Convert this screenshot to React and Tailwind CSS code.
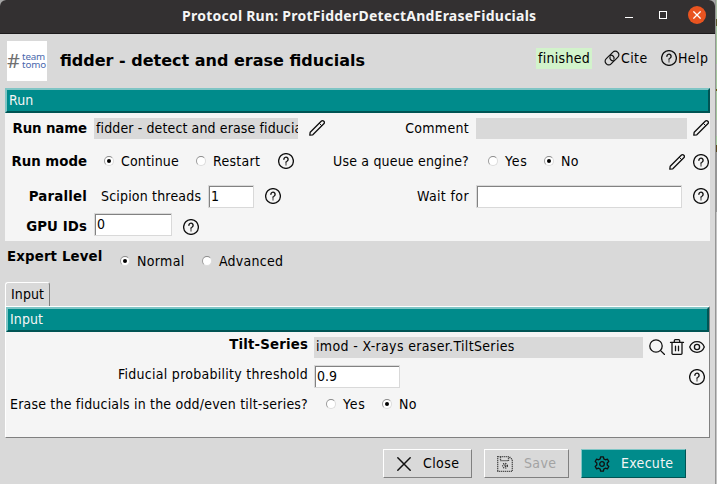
const dv = "font-['DejaVu_Sans_Condensed','DejaVu_Sans',sans-serif] [font-stretch:condensed]";

function Label({ className = "", track = "tracking-[0.15px]", children }) {
  return <span className={`block shrink-0 whitespace-nowrap pb-[2px] text-[14px] leading-[18px] ${track} ${className}`}>{children}</span>;
}

function Strong({ className = "", children }) {
  return (
    <span className={`block shrink-0 whitespace-nowrap font-['DejaVu_Sans',sans-serif] text-[13.33px] font-bold leading-[18px] [font-stretch:normal] ${className}`}>
      {children}
    </span>
  );
}

function Icon({ className = "", children }) {
  return (
    <svg viewBox="0 0 16 16" className={`block h-4 w-4 shrink-0 ${className}`} fill="none" stroke="#111" strokeWidth="1.3" strokeLinecap="round" strokeLinejoin="round">
      {children}
    </svg>
  );
}

function Help({ className }) {
  return (
    <Icon className={className}>
      <circle cx="8" cy="8" r="7.4" />
      <path d="M5.9 6.3a2.1 2.1 0 1 1 3.3 1.7C8.4 8.5 8 8.8 8 9.6" strokeWidth="1.4" />
      <path d="M8 9.2v2.8" stroke="#777" strokeWidth="1.5" />
    </Icon>
  );
}

function Pencil({ className }) {
  return (
    <Icon className={className}>
      <path d="M.8 15.2l.4-3L12.2 1.2a1.6 1.6 0 0 1 2.6 2.6L3.8 14.8z" />
      <path d="M10.4 3.4l2.2 2.2" strokeWidth="1" />
    </Icon>
  );
}

function Radio({ checked = false, className = "" }) {
  return (
    <span className={`flex h-[10px] w-[10px] shrink-0 items-center justify-center rounded-full border border-b-[#dcdcdc] border-l-[#9a9a9a] border-r-[#dcdcdc] border-t-[#8a8a8a] bg-white ${className}`}>
      {checked && <span className="block h-1 w-1 rounded-full bg-black" />}
    </span>
  );
}

function Entry({ className = "", children }) {
  return (
    <div className={`flex h-[23px] shrink-0 items-center border border-[#d9d9d9] bg-white pb-[2px] pl-[2px] text-[14px] leading-[18px] shadow-[inset_1px_1px_0_#828282] ${className}`}>
      {children}
    </div>
  );
}

function Section({ className = "", children }) {
  return (
    <div className={`flex h-[25px] items-center border-2 border-b-[#005454] border-l-[#7fc5c5] border-r-[#005454] border-t-[#7fc5c5] bg-[#008b8b] pb-[2px] text-[14px] leading-[18px] tracking-[0.1px] text-[#f5f5f5] ${className}`}>
      {children}
    </div>
  );
}

function TitleBar() {
  return (
    <div className="flex h-[34px] rounded-t-[6px] border-b border-[#1c1a1b] bg-[#333031] pl-[182px]">
      <h1 className="mt-[6px] w-[443px] whitespace-nowrap font-['Noto_Sans',sans-serif] text-[14px] font-bold leading-[20px] tracking-[0.24px] text-[#f5f5f5] [font-stretch:normal]">
        Protocol Run: ProtFidderDetectAndEraseFiducials
      </h1>
      <span className="mt-[17px] h-px w-2 bg-white" />
      <span className="ml-[26px] mt-[11px] h-2 w-2 border border-white" />
      <span className="ml-[21px] mt-[6px] flex h-[18px] w-[18px] items-center justify-center rounded-full bg-[#e95420]">
        <svg viewBox="0 0 8 8" className="h-2 w-2" stroke="white" strokeWidth="1.3">
          <path d="M.4.4l7.2 7.2M7.6.4L.4 7.6" />
        </svg>
      </span>
    </div>
  );
}

function Header() {
  return (
    <div className="flex h-[54px] pl-[7px]">
      <div className="mt-[7px] flex h-10 w-10 items-center bg-white font-['Noto_Sans',sans-serif] [font-stretch:normal]">
        <span className="w-[15px] text-[20px] leading-[24px] text-[#707070]">#</span>
        <span className="text-[9.5px] leading-[8px] tracking-[-0.15px] text-[#4a68ad]">
          <span className="block origin-left scale-x-[1.03]">team</span>
          <span className="block origin-left scale-x-[1.03]">tomo</span>
        </span>
      </div>
      <h2 className="ml-[13px] mt-[17px] w-[476px] whitespace-nowrap font-['DejaVu_Sans',sans-serif] text-[16px] font-bold leading-[20px] [font-stretch:normal]">
        fidder - detect and erase fiducials
      </h2>
      <div className="mt-[14px] h-[21px] w-14 bg-[#d2f3cb] pl-[2px] pt-px text-[14px] leading-[18px] tracking-[0.3px]">finished</div>
      <Icon className="ml-3 mt-[16px]">
        <path d="M6.2 4.9l2.7-2.7a3.2 3.2 0 0 1 4.7 0l.3.3a3.2 3.2 0 0 1 0 4.6l-2.7 2.7a3.2 3.2 0 0 1-4.5 0 2.8 2.8 0 0 1-.6-3" strokeWidth="1.2" />
        <path d="M9.8 11.1l-2.7 2.7a3.2 3.2 0 0 1-4.7 0l-.3-.3a3.2 3.2 0 0 1 0-4.6l2.7-2.7a3.2 3.2 0 0 1 4.5 0 2.8 2.8 0 0 1 .6 3" strokeWidth="1.2" />
      </Icon>
      <Label className="ml-px mt-[15px] w-[40px]" track="tracking-[0.4px]">Cite</Label>
      <Help className="mt-[16px]" />
      <Label className="ml-px mt-[15px]" track="tracking-[0.4px]">Help</Label>
    </div>
  );
}

function RunPanel() {
  return (
    <div className="ml-[5px] w-[705px] bg-[#f5f5f5]">
      <Section className="pl-[2px]">Run</Section>
      <div className="flex h-[31px] items-center">
        <Strong className="w-[82px] text-right tracking-[-0.1px]">Run name</Strong>
        <div className="ml-[7px] flex h-[21px] w-[204px] shrink-0 items-center overflow-hidden bg-[#d9d9d9] pl-[2px]">
          <Label track="tracking-[0.12px]">fidder - detect and erase fiducials</Label>
        </div>
        <Pencil className="mb-px ml-[11px]" />
        <Label className="w-[144px] text-right" track="tracking-[0.3px]">Comment</Label>
        <div className="ml-[7px] h-[21px] w-[211px] shrink-0 bg-[#d9d9d9]" />
        <Pencil className="mb-px ml-[6px]" />
      </div>
      <div className="flex h-[35px] items-center">
        <Strong className="w-[82px] text-right">Run mode</Strong>
        <Radio checked className="mb-px ml-[17px]" />
        <Label className="ml-[7px] w-[75px]">Continue</Label>
        <Radio className="mb-px" />
        <Label className="ml-[7px] w-[65px]" track="tracking-[0.3px]">Restart</Label>
        <Help className="mb-px" />
        <Label className="w-[175px] text-right" track="tracking-[0.19px]">Use a queue engine?</Label>
        <Radio className="mb-px ml-[19px]" />
        <Label className="ml-[7px] w-[39px]" track="tracking-[0.8px]">Yes</Label>
        <Radio checked className="mb-px" />
        <Label className="ml-[7px] w-[108px]" track="tracking-[0.3px]">No</Label>
        <Pencil className="mt-px" />
        <Help className="ml-2 mt-px" />
      </div>
      <div className="flex h-[35px] items-center">
        <Strong className="w-[82px] text-right tracking-[0.2px]">Parallel</Strong>
        <Label className="ml-[14px] w-[107px]" track="tracking-[0.18px]">Scipion threads</Label>
        <Entry className="w-[46px]">1</Entry>
        <Help className="mb-px ml-[11px]" />
        <Label className="w-[188px] text-right" track="tracking-[0.38px]">Wait for</Label>
        <Entry className="ml-[7px] w-[206px]" />
        <Help className="mb-px ml-[11px]" />
      </div>
      <div className="flex h-[27px] items-start">
        <Strong className="mt-[4px] w-[82px] text-right tracking-[0.1px]">GPU IDs</Strong>
        <Entry className="-mt-px ml-[7px] w-[78px]">0</Entry>
        <Help className="ml-[11px] mt-[5px]" />
      </div>
    </div>
  );
}

function ExpertLevel() {
  return (
    <div className="flex h-[41px] pl-[7px]">
      <Strong className="mt-[7px] w-[113px] tracking-[0.15px]">Expert Level</Strong>
      <Radio checked className="mt-[15px]" />
      <Label className="ml-[7px] mt-[11px] w-[65px]" track="tracking-[0.35px]">Normal</Label>
      <Radio className="mt-[15px]" />
      <Label className="ml-[7px] mt-[11px]" track="tracking-[0.25px]">Advanced</Label>
    </div>
  );
}

function InputPanel() {
  return (
    <div className="ml-[5px] w-[705px]">
      <div className="h-[24px] w-[45px] rounded-t-[3px] border border-b-0 border-l-white border-r-[#808080] border-t-white pl-[5px] pt-[2px] text-[14px] leading-[18px] tracking-[0.1px]">
        Input
      </div>
      <div className="h-[132px] border border-b-[#808080] border-l-white border-r-[#808080] border-t-white bg-[#f5f5f5]">
        <Section className="pl-[2px]">Input</Section>
        <div className="flex h-[30px] items-center">
          <Strong className="-mt-[5px] w-[302px] text-right tracking-[0.18px]">Tilt-Series</Strong>
          <div className="ml-[6px] flex h-[21px] w-[329px] shrink-0 items-center bg-[#d9d9d9] pl-[2px]">
            <Label track="tracking-[0.34px]">imod - X-rays eraser.TiltSeries</Label>
          </div>
          <Icon className="ml-[6px]">
            <circle cx="7" cy="7" r="6.2" />
            <path d="M11.6 11.6l4 4" />
          </Icon>
          <Icon className="ml-1">
            <path d="M1.5 3.4h13M3 3.4v10.8a1.2 1.2 0 0 0 1.2 1.2h7.6a1.2 1.2 0 0 0 1.2-1.2V3.4M5.3 3.2V1.7c0-.6.4-1 1-1h3.4c.6 0 1 .4 1 1v1.5M6.5 7.2v4.5M9.5 7.2v4.5" />
          </Icon>
          <Icon className="ml-1">
            <path d="M.7 8C2 4.7 4.7 2.7 8 2.7S14 4.7 15.3 8C14 11.3 11.3 13.3 8 13.3S2 11.3.7 8z" />
            <circle cx="8" cy="8" r="2.6" />
          </Icon>
        </div>
        <div className="flex h-[30px] items-center">
          <Label className="-mt-[4px] w-[302px] text-right" track="tracking-[0.27px]">Fiducial probability threshold</Label>
          <Entry className="-mt-px ml-[6px] w-[86px]">0.9</Entry>
          <Help className="ml-[289px]" />
        </div>
        <div className="flex h-[24px] items-center">
          <Label className="mt-[2px] w-[302px] text-right" track="tracking-[0.2px]">Erase the fiducials in the odd/even tilt-series?</Label>
          <Radio className="ml-[18px]" />
          <Label className="ml-[7px] mt-[2px] w-[39px]" track="tracking-[0.8px]">Yes</Label>
          <Radio checked />
          <Label className="ml-[7px] mt-[2px]" track="tracking-[0.3px]">No</Label>
        </div>
      </div>
    </div>
  );
}

function Footer() {
  const base = "flex h-[29px] shrink-0 items-center border";
  const grey = "border-b-[#808080] border-l-white border-r-[#808080] border-t-white";
  return (
    <div className="mt-[11px] flex pl-[383px]">
      <button className={`${base} ${grey} w-[89px] pl-[12px]`}>
        <Icon><path d="M1.8 1.8l12.4 12.4M14.2 1.8L1.8 14.2" strokeWidth="1.5" /></Icon>
        <Label className="ml-[11px]" track="tracking-[0.4px]">Close</Label>
      </button>
      <button className={`${base} ${grey} ml-3 w-[85px] pl-[12px] text-[#a3a3a3]`}>
        <Icon>
          <g stroke="#222" strokeDasharray="1 1" strokeLinecap="butt" strokeWidth="1.3">
            <path d="M.7.7h11.6l3 3v11.6H.7zM3.5.7v4h8v-4" />
            <circle cx="8" cy="9.8" r="2.3" />
            <circle cx="8" cy="9.8" r=".6" />
          </g>
        </Icon>
        <Label className="ml-[11px]" track="tracking-[0.35px]">Save</Label>
      </button>
      <button className={`${base} ml-3 w-[105px] border-b-[#005454] border-l-[#7fc5c5] border-r-[#005454] border-t-[#7fc5c5] bg-[#008b8b] pl-[12px] text-[#f5f5f5]`}>
        <Icon>
          <path d="M6.6.8h2.8l.4 2.1 1.6.9 2-.7 1.4 2.4-1.6 1.4v2.2l1.6 1.4-1.4 2.4-2-.7-1.6.9-.4 2.1H6.6l-.4-2.1-1.6-.9-2 .7-1.4-2.4 1.6-1.4V6.9L1.2 5.5l1.4-2.4 2 .7 1.6-.9z" />
          <circle cx="8" cy="8" r="2.3" />
        </Icon>
        <Label className="ml-[11px]" track="tracking-[0.3px]">Execute</Label>
      </button>
    </div>
  );
}

export default function App() {
  return (
    <div className={`flex h-[484px] w-[717px] overflow-hidden bg-[#a5a5a5] text-black ${dv}`}>
      <div className="w-[715px] shrink-0 rounded-t-[6px] bg-[#d9d9d9]">
        <TitleBar />
        <Header />
        <RunPanel />
        <ExpertLevel />
        <InputPanel />
        <Footer />
      </div>
      <div className="w-px bg-[#969696]" />
      <div className="flex flex-1 flex-col">
        <div className="h-[19px] bg-[#a9bfa3]" />
        <div className="h-[7px] bg-[#5c5a2c]" />
        <div className="h-[38px] bg-[#a4c79d]" />
        <div className="h-[6px] bg-[#b5b5b5]" />
        <div className="h-[19px] bg-[#a4c79d]" />
        <div className="h-[2px] bg-[#6b5a10]" />
        <div className="h-[29px] bg-[#a4c79d]" />
        <div className="h-[16px] bg-[#b5b5b5]" />
        <div className="h-[9px] bg-[#a4c79d]" />
        <div className="h-[7px] bg-[#5c4a20]" />
        <div className="h-[60px] bg-[#969696]" />
        <div className="flex-1 bg-[#c4c4c4]" />
      </div>
    </div>
  );
}
